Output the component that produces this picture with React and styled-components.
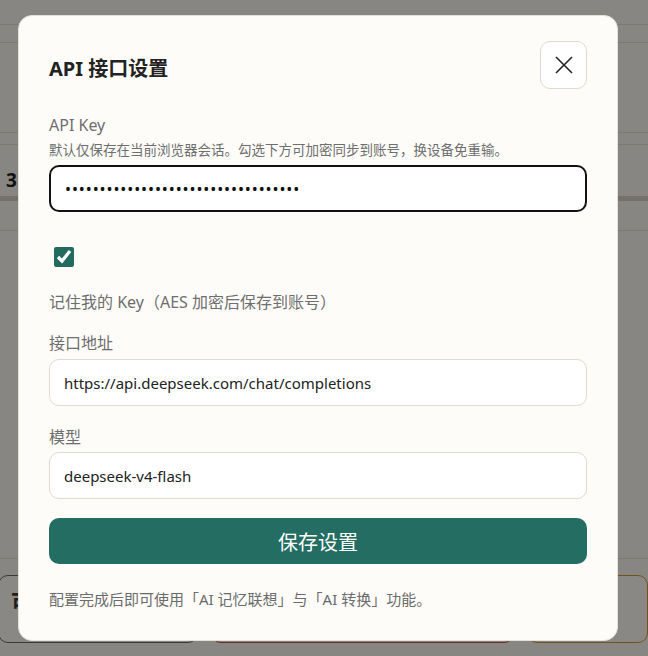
import React, { useState } from 'react';
import styled, { createGlobalStyle } from 'styled-components';

const GlobalStyle = createGlobalStyle`
  html, body {
    margin: 0;
    padding: 0;
    background: #f6f3ec;
    font-family: "Noto Sans", "Noto Sans CJK SC", sans-serif;
  }
  * { box-sizing: border-box; }
`;

/* page behind the dialog */
const Page = styled.div`
  height: 656px;
  overflow: hidden;
  background: #f7f4ed;
  display: flex;
  flex-direction: column;
`;

const TopBar = styled.div`
  height: 43px;
  border-bottom: 1px solid #e2ddd2;
`;

const TopLine = styled.div`
  height: 25px;
  border-bottom: 1px solid #e2ddd2;
`;

const Band = styled.div`
  margin-top: 89px;
  height: 13px;
  border-top: 1px solid #e2ddd2;
  border-bottom: 1px solid #e2ddd2;
`;

const Stat = styled.div`
  height: 86px;
  padding: 26px 0 0 6px;
  border-bottom: 1px solid #e2ddd2;
`;

const BigNum = styled.div`
  font-family: "Open Sans", sans-serif;
  font-weight: 700;
  font-size: 19px;
  line-height: 18px;
  color: #1f1f1f;
`;

const Track = styled.div`
  margin: 7px 0 0 -6px;
  height: 5px;
  background: #d3cec4;
`;

const Bottom = styled.div`
  margin-top: auto;
  border-top: 1px solid #e2ddd2;
  padding: 16px 0 13px;
`;

const CardRow = styled.div`
  display: grid;
  grid-template-columns: 200px 303px 1fr;
  gap: 13px;
  margin-left: -2px;
`;

const Card = styled.div`
  height: 68px;
  border: 1px solid ${p => p.tone};
  border-radius: 10px;
  background: #fbf8f1;
  padding: 12px 12px;
  font-size: 22px;
  font-weight: 700;
  line-height: 26px;
  color: #3a3a3a;
`;

const Overlay = styled.div`
  position: fixed;
  inset: 0;
  background: rgba(0, 0, 0, 0.45);
  display: flex;
  align-items: center;
  justify-content: center;
  padding-right: 12px;
`;

const Dialog = styled.div`
  width: 600px;
  background: #fdfcf8;
  border: 1px solid #e6e1d6;
  border-radius: 14px;
  padding: 25px 30px 30px;
  display: flex;
  flex-direction: column;
`;

const Header = styled.div`
  display: flex;
  align-items: center;
  justify-content: space-between;
  height: 48px;
`;

const Title = styled.h2`
  margin: 0;
  font-size: 20px;
  font-weight: 700;
  color: #222;
  padding-top: 4px;
`;

const CloseButton = styled.button`
  width: 47px;
  height: 48px;
  border: 1px solid #e1d9cc;
  border-radius: 10px;
  background: #fff;
  display: flex;
  align-items: center;
  justify-content: center;
  padding: 0;
  cursor: pointer;
`;

const Label = styled.label`
  display: block;
  font-size: 16px;
  line-height: 22px;
  color: #6e6e6e;
  margin-top: ${p => p.top || 0}px;
`;

const Hint = styled.div`
  font-size: 13.5px;
  line-height: 22px;
  color: #6e6e6e;
  margin-top: 3px;
`;

const Input = styled.input`
  display: block;
  width: 100%;
  height: 47px;
  margin-top: ${p => p.top || 5}px;
  padding: 0 14px;
  border: ${p => (p.focused ? '2px solid #111' : '1px solid #e1d9cc')};
  border-radius: 10px;
  background: #fff;
  font-family: "Noto Sans", "Noto Sans CJK SC", sans-serif;
  font-size: 15px;
  color: #222;
  outline: none;

  &[type='password'] {
    font-size: 16px;
    letter-spacing: 0.9px;
    color: #111;
  }
`;

const Check = styled.input`
  display: block;
  width: 20px;
  height: 20px;
  margin: 35px 0 0 5px;
  accent-color: #236b5f;
`;

const SaveButton = styled.button`
  margin-top: 19px;
  height: 46px;
  width: 100%;
  border: none;
  border-radius: 10px;
  background: #236d62;
  color: #fff;
  font-family: "Noto Sans", "Noto Sans CJK SC", sans-serif;
  font-size: 20px;
  cursor: pointer;
`;

const Footer = styled.p`
  margin: 24px 0 0;
  font-size: 15px;
  line-height: 22px;
  color: #6b6b6b;
`;

const App = () => {
  const [remember, setRemember] = useState(true);
  const [url, setUrl] = useState('https://api.deepseek.com/chat/completions');
  const [model, setModel] = useState('deepseek-v4-flash');

  return (
    <>
      <GlobalStyle />
      <Page>
        <TopBar>
          <TopLine />
        </TopBar>
        <Band />
        <Stat>
          <BigNum>3</BigNum>
          <Track />
        </Stat>
        <Bottom>
          <CardRow>
            <Card tone="#6b6b6b">可</Card>
            <Card tone="#c0504d" />
            <Card tone="#c8952f" />
          </CardRow>
        </Bottom>
      </Page>
      <Overlay>
        <Dialog>
          <Header>
            <Title>API 接口设置</Title>
            <CloseButton aria-label="关闭">
              <svg width="20" height="20" viewBox="0 0 20 20" fill="none" stroke="#222" strokeWidth="1.6">
                <path d="M2 2 L18 18 M18 2 L2 18" />
              </svg>
            </CloseButton>
          </Header>
          <Label top={25}>API Key</Label>
          <Hint>默认仅保存在当前浏览器会话。勾选下方可加密同步到账号，换设备免重输。</Hint>
          <Input type="password" focused top={4} defaultValue="sk-0123456789abcdef0123456789abcde" />
          <Check type="checkbox" checked={remember} onChange={e => setRemember(e.target.checked)} />
          <Label top={24}>记住我的 Key（AES 加密后保存到账号）</Label>
          <Label top={19}>接口地址</Label>
          <Input value={url} onChange={e => setUrl(e.target.value)} />
          <Label top={20}>模型</Label>
          <Input top={4} value={model} onChange={e => setModel(e.target.value)} />
          <SaveButton>保存设置</SaveButton>
          <Footer>配置完成后即可使用「AI 记忆联想」与「AI 转换」功能。</Footer>
        </Dialog>
      </Overlay>
    </>
  );
};

export default App;
